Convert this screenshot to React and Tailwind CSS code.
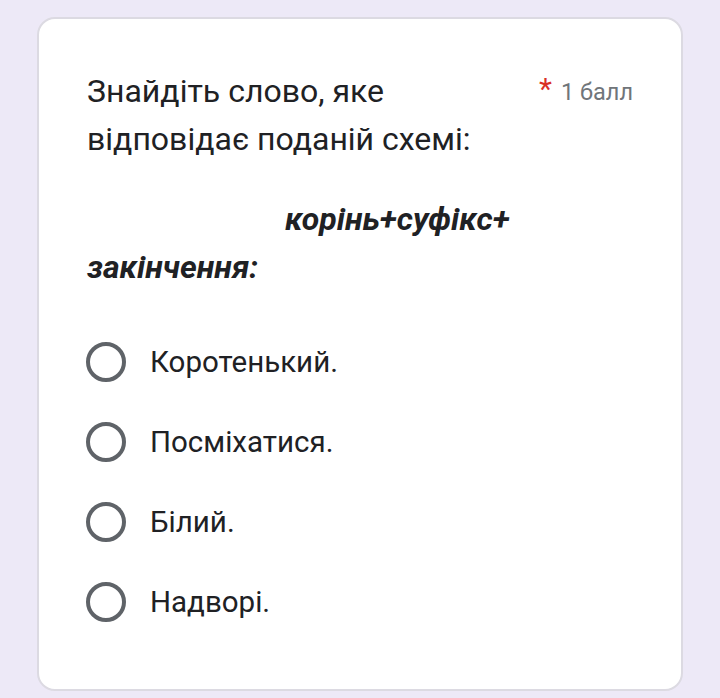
import React from "react";

const options = ["Коротенький.", "Посміхатися.", "Білий.", "Надворі."];

const Radio = () => (
  <div className="w-[40px] h-[40px] rounded-full border-[4px] border-[#5f6368] shrink-0" />
);

export default function App() {
  return (
    <div
      className="w-[720px] h-[698px] bg-[#ede9f7] pt-[17px] px-[37px] overflow-hidden"
      style={{ fontFamily: "Roboto, 'Noto Sans', sans-serif" }}
    >
      <div className="h-[674px] bg-white border-2 border-[#dcdae2] rounded-[18px] pl-[47px] pr-[48px] pt-[48px]">
        {/* question */}
        <div className="flex justify-between items-start">
          <div className="text-[32px] leading-[48px] text-[#202124] w-[420px] pl-px">
            Знайдіть слово, яке відповідає поданій схемі:
          </div>
          <div className="flex items-start gap-[9px] pt-[5px]">
            <span className="text-[#d93025] text-[30px] leading-[40px] -mt-[3px]">*</span>
            <span className="text-[#70757a] text-[23.5px] leading-[40px]">1 балл</span>
          </div>
        </div>

        <div className="mt-[32px] pl-px text-[32px] leading-[48px] text-[#202124] font-bold italic">
          <div className="pl-[198px]">корінь+суфікс+</div>
          <div>закінчення:</div>
        </div>

        {/* options */}
        <div className="mt-[51px] flex flex-col gap-[40px]">
          {options.map((o) => (
            <div key={o} className="flex items-center gap-[24px]">
              <Radio />
              <span className="text-[29.5px] leading-[39px] text-[#202124]">{o}</span>
            </div>
          ))}
        </div>
      </div>
    </div>
  );
}
